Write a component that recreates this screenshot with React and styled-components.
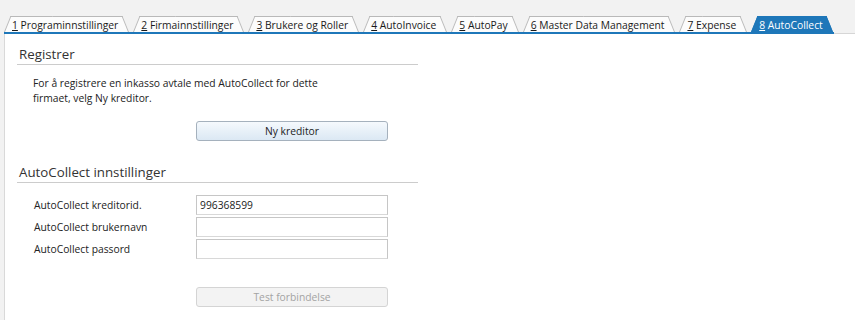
import styled, { createGlobalStyle } from 'styled-components';

const GlobalStyle = createGlobalStyle`
  html, body {
    margin: 0;
    padding: 0;
    background: #ffffff;
  }
  body {
    font-family: "Open Sans", "Noto Sans", sans-serif;
    font-size: 10.3px;
    color: #222;
  }
`;

const tabs = [
  { key: '1', label: 'Programinnstillinger' },
  { key: '2', label: 'Firmainnstillinger' },
  { key: '3', label: 'Brukere og Roller' },
  { key: '4', label: 'AutoInvoice' },
  { key: '5', label: 'AutoPay' },
  { key: '6', label: 'Master Data Management' },
  { key: '7', label: 'Expense' },
  { key: '8', label: 'AutoCollect', active: true },
];

const fields = [
  { label: 'AutoCollect kreditorid.', value: '996368599' },
  { label: 'AutoCollect brukernavn', value: '' },
  { label: 'AutoCollect passord', value: '' },
];

function App() {
  return (
    <Page>
      <GlobalStyle />
      <TabStrip>
        <TabRow>
          {tabs.map(t => (
            <Tab key={t.key} $active={t.active}>
              <TabText><u>{t.key}</u> {t.label}</TabText>
            </Tab>
          ))}
        </TabRow>
        <TabFiller />
      </TabStrip>
      <Content>
        <Section>
          <Heading>Registrer</Heading>
          <Intro>
            For å registrere en inkasso avtale med AutoCollect for dette<br />
            firmaet, velg Ny kreditor.
          </Intro>
          <ButtonRow $top={15}>
            <Button>Ny kreditor</Button>
          </ButtonRow>
        </Section>
        <Section $top={21}>
          <Heading>AutoCollect innstillinger</Heading>
          <Fields>
            {fields.map(f => (
              <FieldRow key={f.label}>
                <Label>{f.label}</Label>
                <Input defaultValue={f.value} />
              </FieldRow>
            ))}
          </Fields>
          <ButtonRow $top={28}>
            <Button disabled>Test forbindelse</Button>
          </ButtonRow>
        </Section>
      </Content>
    </Page>
  );
}

export default App;

const Page = styled.div`
  width: 855px;
  height: 320px;
  display: flex;
  flex-direction: column;
  background: #f2f2f2;
  overflow: hidden;
`;

const TabStrip = styled.div`
  display: flex;
  padding-top: 16px;
  padding-left: 4px;
`;

const TabRow = styled.div`
  display: flex;
  gap: 4px;
  border-bottom: 2px solid #1e77b9;
`;

const TabFiller = styled.div`
  flex: 1;
  border-bottom: 1px solid #d6d6d6;
`;

const Tab = styled.div`
  position: relative;
  height: 16px;
  padding: 0 11px 0 8px;
  display: flex;
  align-items: center;
  color: ${props => props.$active ? '#ffffff' : '#1a1a1a'};

  &::before, &::after {
    content: '';
    position: absolute;
    top: 0;
    bottom: 0;
    width: 55%;
    background: ${props => props.$active ? '#1e77b9' : '#fcfcfc'};
    border-top: 1px solid ${props => props.$active ? '#1e77b9' : '#b9b9b9'};
  }
  &::before {
    left: 0;
    border-left: 1px solid ${props => props.$active ? '#1e77b9' : '#b9b9b9'};
    transform: skewX(-22deg);
    transform-origin: bottom left;
  }
  &::after {
    right: 0;
    border-right: 1px solid ${props => props.$active ? '#1e77b9' : '#b9b9b9'};
    transform: skewX(22deg);
    transform-origin: bottom right;
  }
`;

const TabText = styled.span`
  position: relative;
  z-index: 1;
  white-space: nowrap;
  line-height: 16px;
  padding-top: 1px;

  u {
    text-underline-offset: 1px;
  }
`;

const Content = styled.div`
  flex: 1;
  margin-left: 4px;
  border-left: 1px solid #d9d9d9;
  background: #ffffff;
  padding-left: 12px;
`;

const Section = styled.div`
  width: 401px;
  margin-top: ${props => props.$top || 10}px;
`;

const Heading = styled.div`
  height: 20px;
  line-height: 20px;
  padding-left: 2px;
  font-size: 13.3px;
  color: #333;
  border-bottom: 1px solid #cccccc;
`;

const Intro = styled.p`
  margin: 11px 0 0 16px;
  line-height: 15px;
  color: #222;
`;

const ButtonRow = styled.div`
  margin-top: ${props => props.$top}px;
  padding-left: 179px;
`;

const Button = styled.button`
  width: 192px;
  height: 20px;
  padding: 0;
  font-family: inherit;
  font-size: 10.3px;
  border-radius: 3px;
  border: 1px solid ${props => props.disabled ? '#d4d4d4' : '#a5b1bd'};
  background: ${props => props.disabled
    ? '#f3f3f3'
    : 'linear-gradient(#f5f9fd, #dbe8f4)'};
  color: ${props => props.disabled ? '#a3a3a3' : '#222'};
`;

const Fields = styled.div`
  margin-top: 12px;
  display: flex;
  flex-direction: column;
  gap: 2px;
`;

const FieldRow = styled.div`
  display: flex;
  align-items: center;
  padding-left: 17px;
`;

const Label = styled.div`
  width: 162px;
  color: #222;
`;

const Input = styled.input`
  width: 192px;
  height: 20px;
  box-sizing: border-box;
  border: 1px solid #c6c6c6;
  border-bottom-color: #d8d8d8;
  padding: 0 3px;
  font-family: inherit;
  font-size: 10.3px;
  color: #222;
  outline: none;
`;
